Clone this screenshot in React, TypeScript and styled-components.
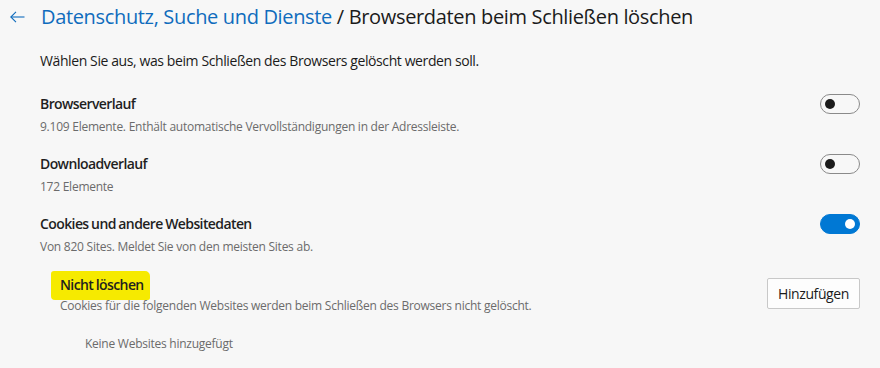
import React from "react";
import styled, { createGlobalStyle } from "styled-components";

const Global = createGlobalStyle`
  html, body { margin: 0; padding: 0; background: #f7f7f7; }
  body { font-family: "Open Sans", "Noto Sans", sans-serif; color: #1b1b1b; }
`;

const Page = styled.div`
  width: 880px;
  height: 368px;
  box-sizing: border-box;
  padding: 3px 20px 0 0;
  overflow: hidden;
`;

const Header = styled.header`
  display: flex;
  align-items: center;
  height: 28px;
  padding-left: 10px;
  gap: 16px;
`;

const BackButton = styled.button`
  display: flex;
  align-items: center;
  justify-content: center;
  width: 15px;
  height: 28px;
  padding: 0;
  border: none;
  background: none;
  color: #0f6cbd;
  cursor: pointer;
`;

const Title = styled.h1`
  margin: 0;
  font-size: 20px;
  line-height: 28px;
  font-weight: 400;
  letter-spacing: -0.34px;
  color: #1b1b1b;
  white-space: nowrap;
`;

const Crumb = styled.a`
  color: #0f6cbd;
  text-decoration: none;
`;

const Body = styled.div`
  padding-left: 40px;
  display: flex;
  flex-direction: column;
`;

const Intro = styled.p`
  margin: 20px 0 23px;
  font-size: 14px;
  line-height: 20px;
  letter-spacing: -0.4px;
  color: #1b1b1b;
`;

const Settings = styled.div`
  display: flex;
  flex-direction: column;
  gap: 19px;
`;

const SettingRow = styled.div`
  display: flex;
  justify-content: space-between;
  align-items: flex-start;
`;

const SettingText = styled.div`
  display: flex;
  flex-direction: column;
  gap: 5px;
`;

const SettingTitle = styled.div`
  font-size: 14px;
  line-height: 20px;
  font-weight: 600;
  letter-spacing: -0.6px;
  word-spacing: -0.5px;
  color: #1f1f1f;
`;

const SettingDesc = styled.div`
  font-size: 12px;
  line-height: 16px;
  letter-spacing: -0.25px;
  color: #6b6b6b;
`;

const Toggle = styled.button<{ $on: boolean }>`
  width: 40px;
  height: 20px;
  box-sizing: border-box;
  padding: 0 4px;
  border-radius: 10px;
  border: 1px solid ${(p) => (p.$on ? "#0078d4" : "#8a8a8a")};
  background: ${(p) => (p.$on ? "#0078d4" : "transparent")};
  display: flex;
  align-items: center;
  justify-content: ${(p) => (p.$on ? "flex-end" : "flex-start")};
  cursor: pointer;
`;

const Knob = styled.span<{ $on: boolean }>`
  width: 10px;
  height: 10px;
  border-radius: 50%;
  background: ${(p) => (p.$on ? "#ffffff" : "#1b1b1b")};
`;

const SubSection = styled.div`
  display: flex;
  justify-content: space-between;
  align-items: center;
  margin-top: 20px;
  padding-left: 20px;
`;

const SubText = styled.div`
  display: flex;
  flex-direction: column;
  gap: 3px;
`;

const Highlighted = styled.span`
  align-self: flex-start;
  display: inline-block;
  font-size: 14px;
  line-height: 20px;
  font-weight: 600;
  letter-spacing: -0.6px;
  word-spacing: -0.5px;
  color: #1f1f1f;
  background: #f6ea00;
  padding: 4px 6px 5px 9px;
  margin: -4px -6px -5px -9px;
  border-radius: 3px 5px 2px 4px;
`;

const AddButton = styled.button`
  width: 93px;
  height: 31px;
  margin-bottom: 3px;
  box-sizing: border-box;
  border: 1px solid #c8c8c8;
  border-radius: 2px;
  background: #fdfdfd;
  font-family: inherit;
  font-size: 14px;
  letter-spacing: -0.4px;
  color: #1b1b1b;
  cursor: pointer;
`;

const Empty = styled.div`
  margin-top: 22px;
  padding-left: 45px;
  font-size: 12px;
  line-height: 16px;
  letter-spacing: -0.25px;
  color: #6b6b6b;
`;

const settings = [
  {
    title: "Browserverlauf",
    desc: "9.109 Elemente. Enthält automatische Vervollständigungen in der Adressleiste.",
    on: false,
  },
  { title: "Downloadverlauf", desc: "172 Elemente", on: false },
  {
    title: "Cookies und andere Websitedaten",
    desc: "Von 820 Sites. Meldet Sie von den meisten Sites ab.",
    on: true,
  },
];

export default function App() {
  return (
    <Page>
      <Global />
      <Header>
        <BackButton aria-label="Zurück">
          <svg width="15" height="12" viewBox="0 0 15 12" fill="none" stroke="currentColor" strokeWidth="1.1">
            <path d="M14.5 6H1" />
            <path d="M6 0.8L0.8 6L6 11.2" />
          </svg>
        </BackButton>
        <Title>
          <Crumb>Datenschutz, Suche und Dienste</Crumb> / Browserdaten beim Schließen löschen
        </Title>
      </Header>
      <Body>
        <Intro>Wählen Sie aus, was beim Schließen des Browsers gelöscht werden soll.</Intro>
        <Settings>
          {settings.map((s) => (
            <SettingRow key={s.title}>
              <SettingText>
                <SettingTitle>{s.title}</SettingTitle>
                <SettingDesc>{s.desc}</SettingDesc>
              </SettingText>
              <Toggle $on={s.on} aria-pressed={s.on}>
                <Knob $on={s.on} />
              </Toggle>
            </SettingRow>
          ))}
        </Settings>
        <SubSection>
          <SubText>
            <Highlighted>Nicht löschen</Highlighted>
            <SettingDesc>Cookies für die folgenden Websites werden beim Schließen des Browsers nicht gelöscht.</SettingDesc>
          </SubText>
          <AddButton>Hinzufügen</AddButton>
        </SubSection>
        <Empty>Keine Websites hinzugefügt</Empty>
      </Body>
    </Page>
  );
}
